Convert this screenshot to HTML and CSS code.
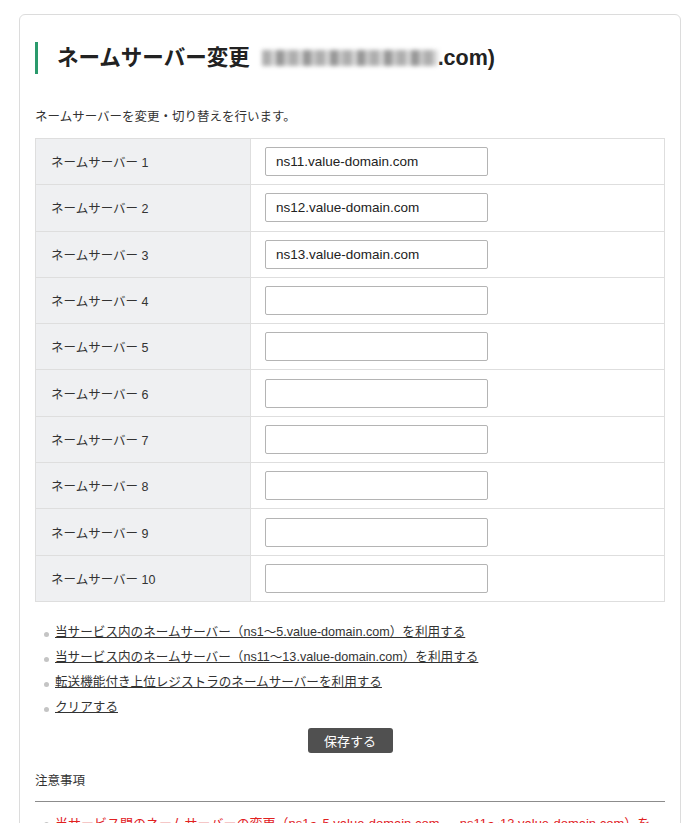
FILE: index.html
```html
<!DOCTYPE html>
<html lang="ja">
<head>
    <meta charset="UTF-8">
    <meta name="viewport" content="width=device-width, initial-scale=1.0">
    <title>ネームサーバー変更</title>
    <link rel="stylesheet" href="styles.css">
</head>
<body>
    <div class="container">
        <h1 class="page-title">ネームサーバー変更 <span class="masked"></span>.com)</h1>

        <p class="lead">ネームサーバーを変更・切り替えを行います。</p>

        <table class="ns-table">
            <tr><th>ネームサーバー 1</th><td><input class="ns-input" type="text" value="ns11.value-domain.com"></td></tr>
            <tr><th>ネームサーバー 2</th><td><input class="ns-input" type="text" value="ns12.value-domain.com"></td></tr>
            <tr><th>ネームサーバー 3</th><td><input class="ns-input" type="text" value="ns13.value-domain.com"></td></tr>
            <tr><th>ネームサーバー 4</th><td><input class="ns-input" type="text"></td></tr>
            <tr><th>ネームサーバー 5</th><td><input class="ns-input" type="text"></td></tr>
            <tr><th>ネームサーバー 6</th><td><input class="ns-input" type="text"></td></tr>
            <tr><th>ネームサーバー 7</th><td><input class="ns-input" type="text"></td></tr>
            <tr><th>ネームサーバー 8</th><td><input class="ns-input" type="text"></td></tr>
            <tr><th>ネームサーバー 9</th><td><input class="ns-input" type="text"></td></tr>
            <tr><th>ネームサーバー 10</th><td><input class="ns-input" type="text"></td></tr>
        </table>

        <ul class="preset-links">
            <li><a href="#">当サービス内のネームサーバー（ns1〜5.value-domain.com）を利用する</a></li>
            <li><a href="#">当サービス内のネームサーバー（ns11〜13.value-domain.com）を利用する</a></li>
            <li><a href="#">転送機能付き上位レジストラのネームサーバーを利用する</a></li>
            <li><a href="#">クリアする</a></li>
        </ul>

        <div class="actions">
            <button class="btn-save" type="button">保存する</button>
        </div>

        <h2 class="notes-title">注意事項</h2>
        <ul class="notes">
            <li>当サービス間のネームサーバーの変更（ns1〜5.value-domain.com ⇔ ns11〜13.value-domain.com）を</li>
        </ul>
    </div>
</body>
</html>
```

FILE: styles.css
```css
body {
    font-family: "Liberation Sans", "Noto Sans CJK JP", sans-serif;
    margin: 0;
    padding: 0;
    background: #ffffff;
    color: #333333;
    font-size: 12.5px;
}

.container {
    margin: 14px 19px 0;
    padding: 27px 15px 40px;
    border: 1px solid #dcdcdc;
    border-radius: 6px;
}

.page-title {
    margin: 0;
    padding-left: 19px;
    border-left: 3px solid #2a9a6c;
    font-size: 21.5px;
    line-height: 32px;
    font-weight: bold;
    color: #222222;
}

.masked {
    display: inline-block;
    width: 176px;
    height: 16px;
    margin-left: 6px;
    vertical-align: -1px;
    background:
        repeating-linear-gradient(90deg, #9a9a9a 0 9px, #cfcfcf 9px 14px, #7d7d7d 14px 22px, #bdbdbd 22px 27px),
        #b5b5b5;
    filter: blur(2px);
    opacity: 0.8;
}

.lead {
    margin: 33px 0 11px;
    line-height: 20px;
}

.ns-table {
    width: 100%;
    border-collapse: collapse;
    border: 1px solid #dedede;
}

.ns-table th,
.ns-table td {
    height: 45.3px;
    border-bottom: 1px solid #dedede;
    padding: 0;
    text-align: left;
}

.ns-table th {
    width: 199px;
    padding-left: 15px;
    background: #eff0f2;
    border-right: 1px solid #dedede;
    font-weight: normal;
    font-size: 12.5px;
    color: #333333;
}

.ns-table td {
    padding-left: 14px;
}

.ns-input {
    box-sizing: border-box;
    width: 223px;
    height: 29px;
    padding: 0 10px;
    border: 1px solid #b4b4b4;
    border-radius: 2px;
    font-family: "Liberation Sans", "Noto Sans CJK JP", sans-serif;
    font-size: 13.5px;
    color: #222222;
    background: #ffffff;
}

.preset-links {
    list-style: none;
    margin: 18px 0 0;
    padding: 0 0 0 9px;
}

.preset-links li {
    position: relative;
    padding-left: 11px;
    line-height: 25px;
    font-size: 12.6px;
}

.preset-links li::before {
    content: "";
    position: absolute;
    left: 0;
    top: 12px;
    width: 5px;
    height: 5px;
    border-radius: 50%;
    background: #c4c4c4;
}

.preset-links a {
    color: #333333;
    text-decoration: underline;
}

.actions {
    text-align: center;
    margin-top: 8px;
}

.btn-save {
    width: 85px;
    height: 25px;
    border: none;
    border-radius: 3px;
    background: #505050;
    color: #ffffff;
    font-family: "Liberation Sans", "Noto Sans CJK JP", sans-serif;
    font-size: 13px;
    cursor: pointer;
}

.notes-title {
    margin: 20px 0 0;
    padding-bottom: 12px;
    border-bottom: 1px solid #8c8c8c;
    font-size: 12.5px;
    font-weight: normal;
    line-height: 16px;
}

.notes {
    list-style: none;
    margin: 12px 0 0;
    padding: 0 0 0 9px;
    color: #e1211f;
}

.notes li {
    position: relative;
    padding-left: 11px;
    font-size: 13px;
    line-height: 20px;
    white-space: nowrap;
}

.notes li::before {
    content: "";
    position: absolute;
    left: 0;
    top: 8px;
    width: 5px;
    height: 5px;
    border-radius: 50%;
    background: #c4c4c4;
}
```
